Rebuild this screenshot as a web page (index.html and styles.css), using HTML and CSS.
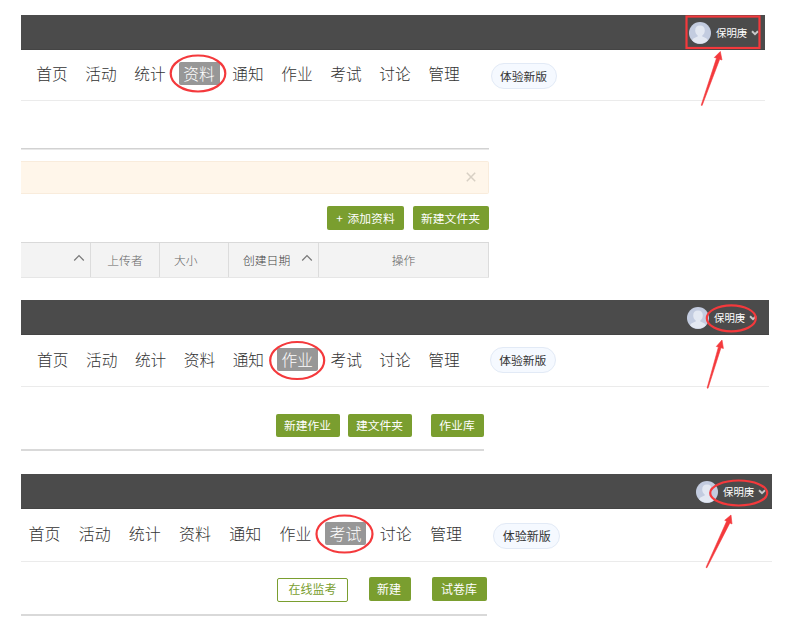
FILE: index.html
```html
<!DOCTYPE html>
<html lang="zh-CN">
<head>
<meta charset="utf-8">
<title>课程管理</title>
<link rel="stylesheet" href="styles.css">
</head>
<body>
<svg class="defs" width="0" height="0" aria-hidden="true">
  <symbol id="avatar" viewBox="0 0 22 22">
    <circle cx="11" cy="11" r="11" fill="#c3cce0"/>
    <path d="M11 3.600c-3 0-4.800 2-4.800 4.800 0 2.100 1 3.900 2.500 5v1.200c-1.300.9-4.200 1.100-5.600 3.600a11 11 0 0 0 15.800 0c-1.400-2.500-4.300-2.700-5.600-3.600v-1.200c1.500-1.100 2.500-2.900 2.500-5 0-2.800-1.800-4.800-4.800-4.800z" fill="#e3e8f2"/>
  </symbol>
  <symbol id="caret" viewBox="0 0 8 6">
    <path d="M1 1.300 4 4.200 7 1.300" fill="none" stroke="#c9c9c9" stroke-width="1.900"/>
  </symbol>
  <symbol id="sort" viewBox="0 0 12 8">
    <path d="M1.200 6.500 6 1.500 10.800 6.500" fill="none" stroke="#777" stroke-width="1.200"/>
  </symbol>
</svg>

<section class="panel files">
  <header class="topbar">
    <svg class="avatar"><use href="#avatar"/></svg><span class="user">保明庚</span><svg class="caret"><use href="#caret"/></svg>
  </header>
  <nav class="nav">
    <a>首页</a><a>活动</a><a>统计</a><a class="active">资料</a><a>通知</a><a>作业</a><a>考试</a><a>讨论</a><a>管理</a>
    <span class="pill">体验新版</span>
  </nav>
  <div class="content">
    <div class="rule"></div>
    <div class="alert"><svg width="10" height="10" viewBox="0 0 10 10"><path d="M.8.8 9.200 9.200M9.200.8.8 9.200" stroke="#d8d0c4" stroke-width="1.500"/></svg></div>
    <div class="actions"><span class="btn add">+ 添加资料</span><span class="btn folder">新建文件夹</span></div>
    <div class="thead">
      <div class="cell name"><svg class="sort"><use href="#sort"/></svg></div>
      <div class="cell">上传者</div>
      <div class="cell size">大小</div>
      <div class="cell date">创建日期<svg class="sort"><use href="#sort"/></svg></div>
      <div class="cell ops">操作</div>
    </div>
  </div>
</section>

<section class="panel work">
  <header class="topbar">
    <svg class="avatar"><use href="#avatar"/></svg><span class="user">保明庚</span><svg class="caret"><use href="#caret"/></svg>
  </header>
  <nav class="nav">
    <a>首页</a><a>活动</a><a>统计</a><a>资料</a><a>通知</a><a class="active">作业</a><a>考试</a><a>讨论</a><a>管理</a>
    <span class="pill">体验新版</span>
  </nav>
  <div class="content">
    <div class="actions"><span class="btn">新建作业</span><span class="btn">建文件夹</span><span class="btn bank">作业库</span></div>
    <div class="rule"></div>
  </div>
</section>

<section class="panel exam">
  <header class="topbar">
    <svg class="avatar"><use href="#avatar"/></svg><span class="user">保明庚</span><svg class="caret"><use href="#caret"/></svg>
  </header>
  <nav class="nav">
    <a>首页</a><a>活动</a><a>统计</a><a>资料</a><a>通知</a><a>作业</a><a class="active">考试</a><a>讨论</a><a>管理</a>
    <span class="pill">体验新版</span>
  </nav>
  <div class="content">
    <div class="actions"><span class="btn outline">在线监考</span><span class="btn create">新建</span><span class="btn bank">试卷库</span></div>
    <div class="rule"></div>
  </div>
</section>

<svg class="marks" width="791" height="628" viewBox="0 0 791 628" aria-hidden="true">
  <g fill="none" stroke="#f4393c" stroke-width="2.200">
    <ellipse cx="198" cy="73.500" rx="27.300" ry="18"/>
    <ellipse cx="297.200" cy="360.500" rx="27" ry="18.500"/>
    <ellipse cx="344.500" cy="534" rx="28" ry="18.500"/>
    <rect x="686.500" y="16.500" width="73" height="31.500"/>
    <ellipse cx="731.300" cy="318.300" rx="24.500" ry="13"/>
    <ellipse cx="738.700" cy="493" rx="28.500" ry="12.500"/>
  </g>
  <g fill="#f4393c" stroke="#f4393c" stroke-width=".6">
    <path d="M720.300 51.500 722 60 719.700 59.200 702.100 105.500 701.200 105.200 716.500 58.100 714.300 57.500z"/>
    <path d="M722 340 723.400 348.500 721 347.700 708 388.300 707.100 388 718.400 347 716.300 346.500z"/>
    <path d="M731 515 732 524 729.900 522.900 706.900 567.800 706 567.400 726.600 521.300 724.700 520.300z"/>
  </g>
</svg>
</body>
</html>
```
FILE: styles.css
```css
* { box-sizing: border-box; }

body {
  margin: 0;
  padding: 15px 0 0 21px;
  width: 791px;
  height: 628px;
  overflow: hidden;
  position: relative;
  background: #fff;
  font-family: "Noto Sans CJK SC", sans-serif;
  font-weight: 300;
  color: #333;
}

.defs { position: absolute; }
svg { flex: none; }

.panel { --pitch: 49px; --fs: 15.7px; }
.files { width: 744px; height: 285px; }
.work { width: 748px; height: 174px; --pitch: 48.9px; }
.exam { width: 751px; --pitch: 50.2px; --fs: 16px; }

.topbar {
  height: 35px;
  display: flex;
  align-items: center;
  justify-content: flex-end;
  padding-right: 6px;
  background: #4b4b4b;
  border-bottom: 1px solid #444;
}
.files .topbar { padding-top: 1px; }
.work .topbar { padding: 1px 12px 0 0; }
.exam .topbar { padding: 1px 6px 0 0; }

.avatar { width: 22px; height: 22px; margin-right: 5px; }
.user { width: 31px; font-size: 10.4px; font-weight: 400; color: #fff; white-space: nowrap; }
.caret { width: 8px; height: 6px; margin-left: 4px; }

.nav {
  height: 51px;
  padding: 0 0 3px 10.500px;
  display: flex;
  align-items: center;
  border-bottom: 1px solid #ebebeb;
}
.work .nav { height: 51.500px; padding: 0 0 2px 11.300px; }
.exam .nav { height: 53px; padding: 0 0 3px 3px; }

.nav a {
  width: 41px;
  height: 23px;
  margin-right: calc(var(--pitch) - 41px);
  border-radius: 2px;
  text-align: center;
  font-size: var(--fs);
  line-height: 23px;
  white-space: nowrap;
}
.nav .active { background: #979797; color: #fff; }

.pill {
  width: 66px;
  height: 26px;
  margin: 4px 0 0 18px;
  border: 1px solid #e2eaf6;
  border-radius: 13px;
  background: #f5f9ff;
  font-size: 11.8px;
  font-weight: 400;
  line-height: 23px;
  text-align: center;
}
.work .pill { margin: 2px 0 0 17.500px; }
.exam .pill { width: 67px; font-size: 12px; margin-left: 17.500px; }

.files .content { width: 468px; padding-top: 47px; }
.work .content { width: 463px; padding-top: 27.500px; }
.exam .content { width: 466px; padding-top: 15px; }

.rule { height: 2px; background: #d9d9d9; }
.files .rule { border-bottom: 1px solid #e8e8e8; background: #d2d2d2; }

.alert {
  height: 33px;
  margin-top: 11px;
  display: flex;
  align-items: center;
  justify-content: flex-end;
  padding: 0 12px 1px 0;
  background: #fff6ea;
  border: 1px solid #f9ecdc;
  border-left: 0;
  border-radius: 0 2px 2px 0;
}

.actions { display: flex; justify-content: flex-end; }
.files .actions { margin-top: 12px; gap: 9px; }
.work .actions { gap: 8px; }

.btn {
  width: 64px;
  height: 23px;
  padding-right: 1px;
  border-radius: 2px;
  background: #7a9e2f;
  color: #fff;
  font-size: 11.8px;
  font-weight: 400;
  line-height: 22px;
  text-align: center;
  white-space: nowrap;
}
.files .btn { height: 24px; line-height: 23px; }
.files .add { width: 77px; padding-right: 0; word-spacing: 2px; }
.folder { width: 76px; }
.work .bank { width: 53px; margin-left: 11px; }
.work .rule { margin-top: 12px; }

.exam .btn { height: 24px; font-size: 12px; line-height: 23px; }
.exam .outline {
  width: 71px;
  padding-right: 0;
  margin: 1px 20.500px 0 0;
  border: 1px solid #7a9e2f;
  background: #fff;
  color: #7a9e2f;
  line-height: 20px;
}
.create { width: 42px; margin-right: 21.500px; }
.exam .bank { width: 55px; }
.exam .rule { margin-top: 12px; }

.thead {
  height: 36px;
  margin-top: 12px;
  display: grid;
  grid-template-columns: 70px 69px 69px 90px 170px;
  background: #f3f3f3;
  border-top: 1px solid #d9d9d9;
  border-bottom: 1px solid #e6e6e6;
}
.cell {
  display: flex;
  align-items: center;
  justify-content: center;
  padding-bottom: 2px;
  border-right: 1px solid #dcdcdc;
  font-size: 11.8px;
  color: #666;
}
.name { justify-content: flex-end; padding-right: 5px; }
.size { justify-content: flex-start; padding-left: 14px; }
.date { justify-content: flex-start; padding-left: 14px; color: #444; }
.sort { width: 12px; height: 8px; margin-bottom: 2px; }
.date .sort { margin-left: 11px; }

.marks { position: absolute; left: 0; top: 0; }
```
